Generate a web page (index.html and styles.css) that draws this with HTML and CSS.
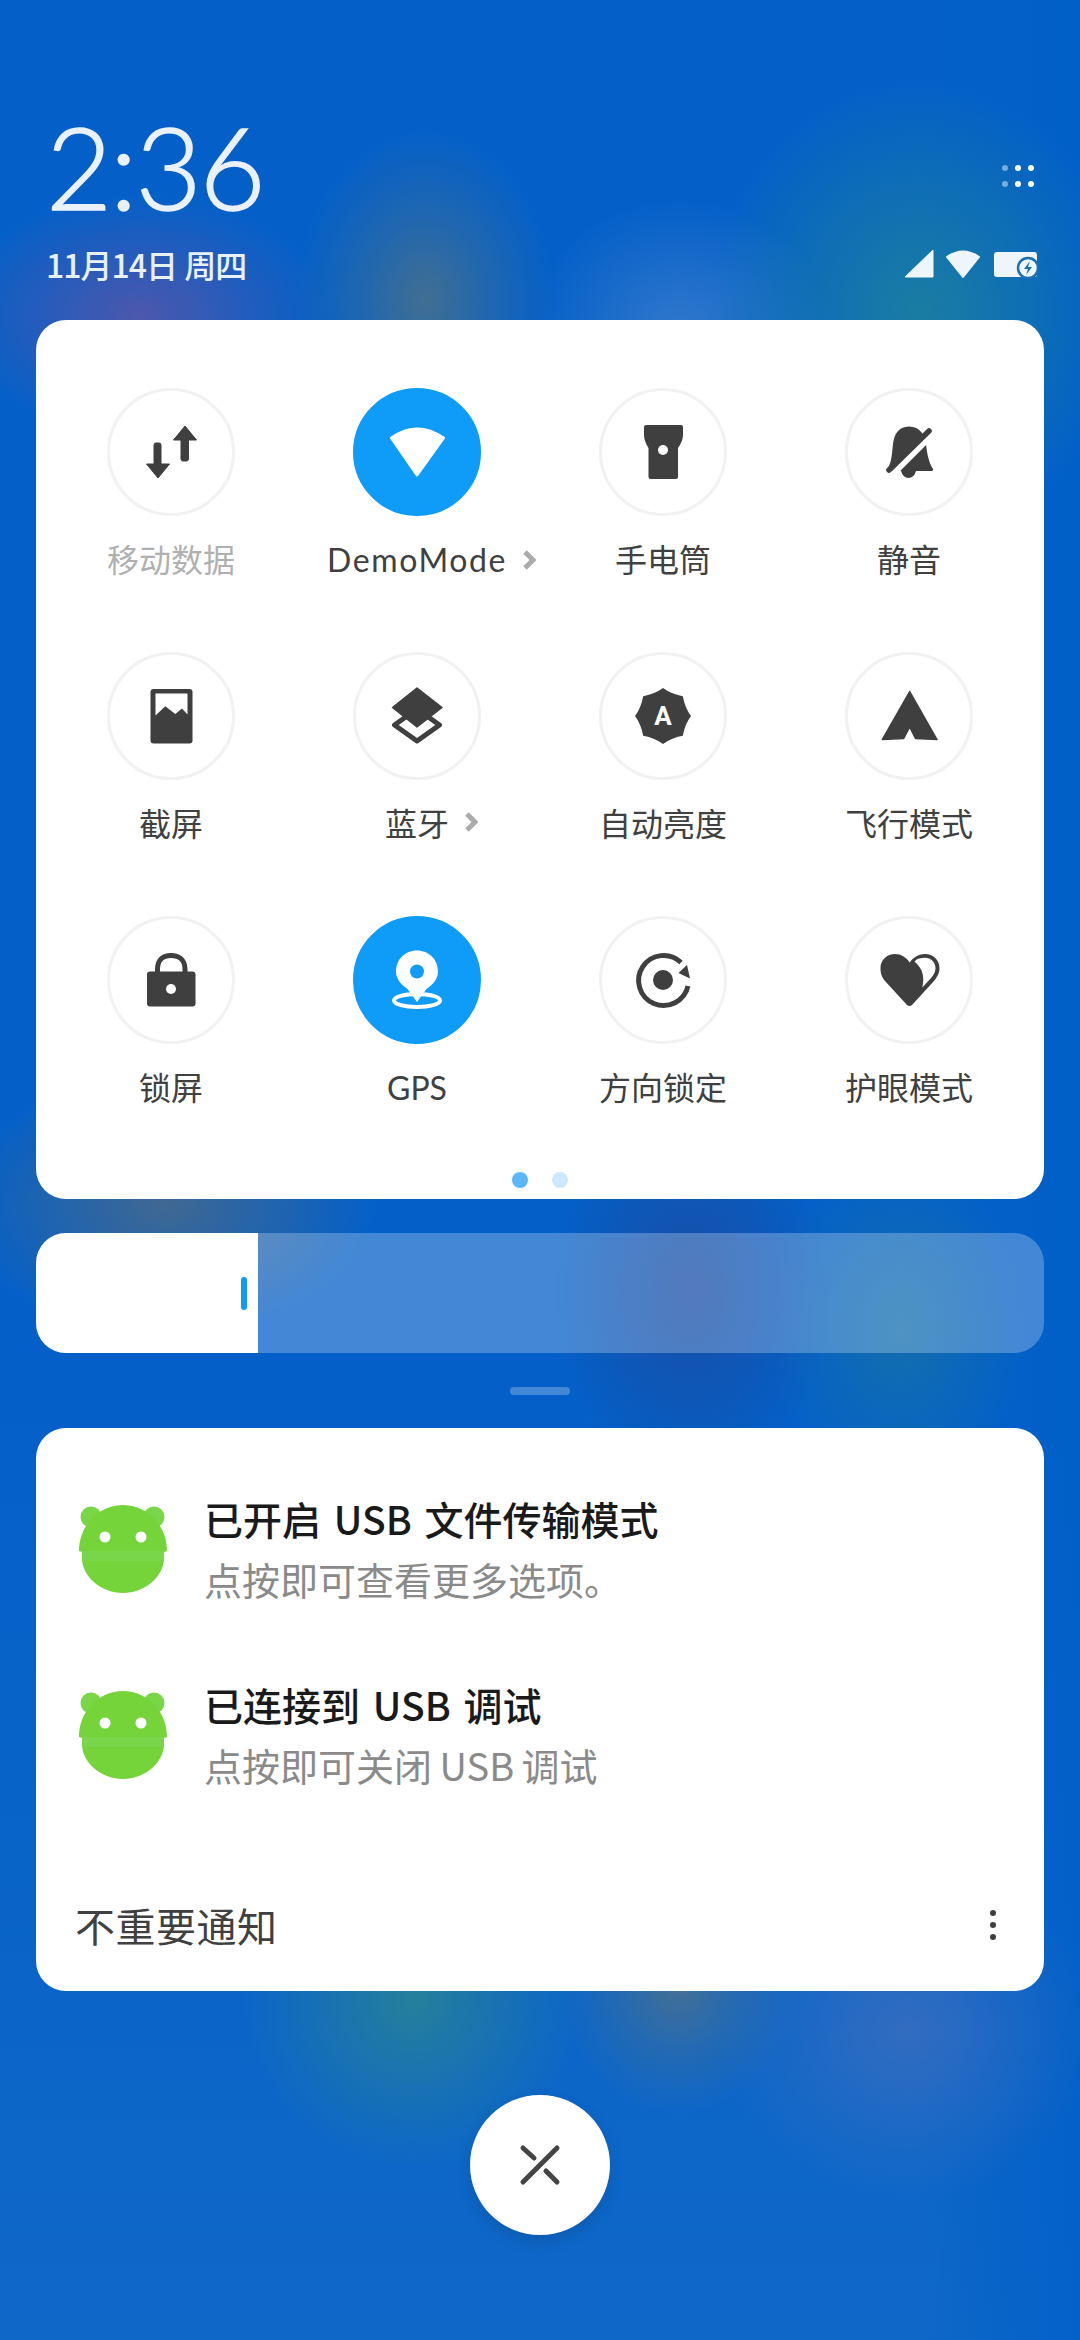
FILE: index.html
```html
<!DOCTYPE html>
<html lang="zh-CN">
<head>
    <meta charset="utf-8">
    <title>Control Center</title>
    <link rel="stylesheet" href="styles.css">
</head>
<body>
    <header class="header">
        <div class="clock-block">
            <div class="clock">2:36</div>
            <div class="date">11月14日 周四</div>
        </div>
        <div class="status-block">
            <svg class="grid-dots" width="40" height="28" viewBox="0 0 40 28">
                <g fill="#fff">
                    <circle cx="7" cy="4" r="3" opacity=".45"/><circle cx="20" cy="4" r="3"/><circle cx="33" cy="4" r="3"/>
                    <circle cx="7" cy="20" r="3" opacity=".45"/><circle cx="20" cy="20" r="3"/><circle cx="33" cy="20" r="3"/>
                </g>
            </svg>
            <svg class="status-icons" width="134" height="30" viewBox="0 0 134 30">
                <path d="M1 28 L29 1 V28 Z" fill="#eef5fb" stroke="#eef5fb" stroke-width="1" stroke-linejoin="round"/>
                <path d="M43 8 Q59 -3 75 8 L59 28 Z" fill="#eef5fb" stroke="#eef5fb" stroke-width="2" stroke-linejoin="round"/>
                <rect x="90" y="3" width="43" height="25" rx="3" fill="#eef5fb"/>
                <circle cx="124" cy="19" r="10" fill="#eef5fb" stroke="#1c6fb0" stroke-width="2.5"/>
                <path d="M126 12 L120 20 H124 L122 26 L128 18 H124 Z" fill="#1c6fb0"/>
            </svg>
        </div>
    </header>

    <section class="panel toggles">
        <div class="toggle-grid">
            <div class="toggle">
                <div class="circle">
                    <svg viewBox="0 0 128 128">
                        <path d="M78 38 L89.5 52 H81.5 V71 Q81.5 73 79.5 73 H76 Q74 73 74 71 V52 H66.5 Z" fill="#3f3f3f" stroke="#3f3f3f" stroke-linejoin="round"/>
                        <path d="M51 90 L39.5 76 H47 V57 Q47 55 49 55 H52 Q54 55 54 57 V76 H62.5 Z" fill="#3f3f3f" stroke="#3f3f3f" stroke-linejoin="round"/>
                    </svg>
                </div>
                <span class="label muted">移动数据</span>
            </div>
            <div class="toggle">
                <div class="circle on">
                    <svg viewBox="0 0 128 128">
                        <path d="M38.5 50 Q64 32 90.5 50 L64 87 Z" fill="#fff" stroke="#fff" stroke-width="3" stroke-linejoin="round"/>
                    </svg>
                </div>
                <span class="label latin demo has-more">DemoMode<svg class="chevron" width="14" height="20" viewBox="0 0 14 20"><path d="M3 2 L11 10 L3 18" fill="none" stroke="#ababab" stroke-width="5"/></svg></span>
            </div>
            <div class="toggle">
                <div class="circle">
                    <svg viewBox="0 0 128 128">
                        <path d="M47 37 H82 Q84 37 84 39 V47 Q84 53 79 60 V89 Q79 91 77 91 H51.5 Q49.5 91 49.5 89 V60 Q45 53 45 47 V39 Q45 37 47 37 Z" fill="#3f3f3f"/>
                        <circle cx="64" cy="62" r="5" fill="#fff"/>
                    </svg>
                </div>
                <span class="label">手电筒</span>
            </div>
            <div class="toggle">
                <div class="circle">
                    <svg viewBox="0 0 128 128">
                        <path d="M64 38.5 C75 38.5 80 47 81 56 C82 66 84 75 88 81 Q88.5 83 86 83 H71 Q69 90 63.5 90 Q58 90 56 83 H44 Q41.5 83 43 80 C47 73 47 64 48 56 C49 47 53 38.5 64 38.5 Z" fill="#3f3f3f"/>
                        <path d="M45 89 L93 41" stroke="#fff" stroke-width="6"/>
                        <path d="M44 82 L84 43" stroke="#3f3f3f" stroke-width="5.5" stroke-linecap="round"/>
                    </svg>
                </div>
                <span class="label">静音</span>
            </div>

            <div class="toggle">
                <div class="circle">
                    <svg viewBox="0 0 128 128">
                        <rect x="43.5" y="37" width="42" height="54.5" rx="3" fill="#3f3f3f"/>
                        <path d="M48.5 63.5 V41.5 H80.5 V62.5 L75 56.5 L68.3 62 L58.3 54.3 Z" fill="#fff"/>
                    </svg>
                </div>
                <span class="label">截屏</span>
            </div>
            <div class="toggle">
                <div class="circle">
                    <svg viewBox="0 0 128 128">
                        <path d="M64 57 L86.5 73 L64 89 L41.5 73 Z" fill="#fff" stroke="#3f3f3f" stroke-width="5" stroke-linejoin="round"/>
                        <path d="M64 36 L89 55.5 L64 75 L39.5 55.5 Z" fill="#3f3f3f" stroke="#3f3f3f" stroke-width="1.5" stroke-linejoin="round"/>
                    </svg>
                </div>
                <span class="label has-more">蓝牙<svg class="chevron" width="14" height="20" viewBox="0 0 14 20"><path d="M3 2 L11 10 L3 18" fill="none" stroke="#ababab" stroke-width="5"/></svg></span>
            </div>
            <div class="toggle">
                <div class="circle">
                    <svg viewBox="0 0 128 128">
                        <path d="M64 36 Q72 42 83.8 44.2 Q86 56 92 64 Q86 72 83.8 83.8 Q72 86 64 92 Q56 86 44.2 83.8 Q42 72 36 64 Q42 56 44.2 44.2 Q56 42 64 36 Z" fill="#3f3f3f"/>
                        <text x="64" y="73" class="badge-letter">A</text>
                    </svg>
                </div>
                <span class="label">自动亮度</span>
            </div>
            <div class="toggle">
                <div class="circle">
                    <svg viewBox="0 0 128 128">
                        <path d="M64.7 39.5 L92 87.5 L70.5 86.5 L64.7 75 L58.7 86.5 L37.3 87.5 Z" fill="#3f3f3f" stroke="#3f3f3f" stroke-width="1.5" stroke-linejoin="round"/>
                    </svg>
                </div>
                <span class="label">飞行模式</span>
            </div>

            <div class="toggle">
                <div class="circle">
                    <svg viewBox="0 0 128 128">
                        <path d="M50.5 57 V53 C50.5 44 56 39.5 64 39.5 C72 39.5 78 44 78 53 V57" fill="none" stroke="#3f3f3f" stroke-width="5"/>
                        <rect x="40" y="55.5" width="48.5" height="35" rx="3" fill="#3f3f3f"/>
                        <circle cx="64" cy="73" r="5" fill="#fff"/>
                    </svg>
                </div>
                <span class="label">锁屏</span>
            </div>
            <div class="toggle">
                <div class="circle on">
                    <svg viewBox="0 0 128 128">
                        <ellipse cx="64" cy="84.5" rx="23" ry="6.5" fill="none" stroke="#fff" stroke-width="4"/>
                        <path d="M64 86 L54.5 73 C47 68 43 62 43 55.5 C43 43.5 52 34.5 64 34.5 C76 34.5 85 43.5 85 55.5 C85 62 81 68 73.5 73 Z" fill="#fff"/>
                        <circle cx="64" cy="55.5" r="7" fill="#0f9bf8"/>
                    </svg>
                </div>
                <span class="label latin">GPS</span>
            </div>
            <div class="toggle">
                <div class="circle">
                    <svg viewBox="0 0 128 128">
                        <path d="M89 70 A25 25 0 1 1 82 46.5" fill="none" stroke="#3f3f3f" stroke-width="5"/>
                        <path d="M88 49 L91 62.5 L79.5 57 Z" fill="#3f3f3f"/>
                        <circle cx="64" cy="64" r="10" fill="#3f3f3f"/>
                    </svg>
                </div>
                <span class="label">方向锁定</span>
            </div>
            <div class="toggle">
                <div class="circle">
                    <svg viewBox="0 0 128 128">
                        <path d="M64.5 90 Q63 90 62 89 L40 65 C36 60 35.5 56 35.5 52 C35.5 44 42 38 50 38 C56 38 61 41 64.7 46.5 C68.5 41 74 38 80 38 C88 38 94.5 44 94.5 52 C94.5 56 93 60 89 65 L67 89 Q66 90 64.5 90 Z" fill="#3f3f3f"/>
                        <path d="M69.5 45.5 C72 42.5 76 41.8 80 41.8 C86 41.8 90.5 46.5 90.5 52 C90.5 55.5 89 58.5 86.5 61.5 L77.3 71.5 C79.5 62 78.5 53 69.5 45.5 Z" fill="#fff"/>
                    </svg>
                </div>
                <span class="label">护眼模式</span>
            </div>
        </div>
        <div class="pager">
            <span class="pager-dot active"></span>
            <span class="pager-dot"></span>
        </div>
    </section>

    <section class="slider">
        <div class="slider-fill"><span class="slider-thumb"></span></div>
    </section>

    <div class="handle"></div>

    <section class="panel notifications">
        <div class="notif">
            <svg class="app-icon" width="88" height="88" viewBox="0 0 88 88">
                <circle cx="12" cy="12" r="10.5" fill="#79d747"/>
                <circle cx="75" cy="12" r="10.5" fill="#79d747"/>
                <path d="M44 0 C68 0 88 20 88 46 L85 47 V53 C85 72 65 88 44 88 C23 88 3 72 3 53 V47 L0 46 C0 20 20 0 44 0 Z" fill="#74d43a"/>
                <rect x="3" y="46" width="82" height="10" fill="#79d64a"/>
                <circle cx="26" cy="32" r="5.5" fill="#fff"/>
                <circle cx="62" cy="32" r="5.5" fill="#fff"/>
            </svg>
            <div class="notif-text">
                <div class="notif-title">已开启 USB 文件传输模式</div>
                <div class="notif-sub">点按即可查看更多选项。</div>
            </div>
        </div>
        <div class="notif">
            <svg class="app-icon" width="88" height="88" viewBox="0 0 88 88">
                <circle cx="12" cy="12" r="10.5" fill="#79d747"/>
                <circle cx="75" cy="12" r="10.5" fill="#79d747"/>
                <path d="M44 0 C68 0 88 20 88 46 L85 47 V53 C85 72 65 88 44 88 C23 88 3 72 3 53 V47 L0 46 C0 20 20 0 44 0 Z" fill="#74d43a"/>
                <rect x="3" y="46" width="82" height="10" fill="#79d64a"/>
                <circle cx="26" cy="32" r="5.5" fill="#fff"/>
                <circle cx="62" cy="32" r="5.5" fill="#fff"/>
            </svg>
            <div class="notif-text">
                <div class="notif-title">已连接到 USB 调试</div>
                <div class="notif-sub">点按即可关闭 USB 调试</div>
            </div>
        </div>
        <div class="notif-footer">
            <span class="footer-text">不重要通知</span>
            <svg width="8" height="32" viewBox="0 0 8 32">
                <g fill="#3f3f3f"><circle cx="4" cy="4" r="3"/><circle cx="4" cy="16" r="3"/><circle cx="4" cy="28" r="3"/></g>
            </svg>
        </div>
    </section>

    <button class="fab">
        <svg width="48" height="48" viewBox="0 0 48 48">
            <g stroke="#444" stroke-width="5" stroke-linecap="round">
                <path d="M7 41 L41 7"/>
                <path d="M7 7 L18 17"/>
                <path d="M30 30 L41 41"/>
            </g>
        </svg>
    </button>
</body>
</html>
```
FILE: styles.css
```css
html, body {
    margin: 0;
    padding: 0;
}

body {
    width: 1080px;
    height: 2340px;
    overflow: hidden;
    font-family: "Noto Sans CJK SC", sans-serif;
    background-color: #0b66c8;
    background-image:
        radial-gradient(ellipse 130px 170px at 425px 300px, rgba(72, 112, 140, 0.9), rgba(72, 112, 140, 0.4) 50%, rgba(72, 112, 140, 0)),
        radial-gradient(ellipse 190px 120px at 140px 315px, rgba(95, 85, 165, 0.8), rgba(95, 85, 165, 0.35) 55%, rgba(95, 85, 165, 0)),
        radial-gradient(ellipse 210px 230px at 920px 310px, rgba(30, 130, 155, 0.85), rgba(30, 130, 155, 0.4) 55%, rgba(30, 130, 155, 0)),
        radial-gradient(ellipse 150px 130px at 680px 330px, rgba(60, 125, 205, 0.8), rgba(60, 125, 205, 0)),
        radial-gradient(ellipse 210px 130px at 165px 1205px, rgba(75, 105, 135, 0.85), rgba(75, 105, 135, 0)),
        radial-gradient(ellipse 140px 200px at 690px 1290px, rgba(30, 72, 155, 0.8), rgba(30, 72, 155, 0)),
        radial-gradient(ellipse 130px 180px at 900px 1330px, rgba(20, 112, 170, 0.9), rgba(20, 112, 170, 0)),
        radial-gradient(ellipse 170px 170px at 413px 2000px, rgba(40, 130, 150, 0.9), rgba(40, 130, 150, 0.4) 55%, rgba(40, 130, 150, 0)),
        radial-gradient(ellipse 120px 130px at 678px 1985px, rgba(72, 112, 145, 0.95), rgba(72, 112, 145, 0.4) 50%, rgba(72, 112, 145, 0)),
        radial-gradient(ellipse 190px 170px at 909px 2030px, rgba(60, 110, 190, 0.8), rgba(60, 110, 190, 0.35) 55%, rgba(60, 110, 190, 0)),
        linear-gradient(to right, rgba(0, 95, 200, 0) 85%, rgba(0, 95, 200, 0.8) 100%),
        linear-gradient(to bottom, #0460c8 0, #0460c8 1400px, #0f68c8 2340px);
}

.header {
    height: 320px;
    box-sizing: border-box;
    padding: 104px 42px 0 46px;
    display: flex;
    justify-content: space-between;
}

.clock {
    font-family: "Lato", sans-serif;
    font-weight: 300;
    font-size: 114px;
    line-height: 124px;
    letter-spacing: -2px;
    -webkit-text-stroke: 1.5px #eaf1fa;
    color: #eaf1fa;
}

.date {
    margin-top: 14px;
    font-size: 32px;
    line-height: 44px;
    font-weight: 500;
    letter-spacing: -1px;
    word-spacing: 1px;
    color: #e8f0f8;
}

.status-block {
    display: flex;
    flex-direction: column;
    align-items: flex-end;
    padding-top: 60px;
}

.grid-dots {
    display: block;
}

.status-icons {
    display: block;
    margin-top: 57px;
}

.panel {
    margin: 0 36px;
    background-color: #fff;
    border-radius: 30px;
}

.toggles {
    box-sizing: border-box;
    height: 879px;
    padding: 68px 12px 14px;
}

.toggle-grid {
    display: grid;
    grid-template-columns: repeat(4, 246px);
    row-gap: 72px;
}

.toggle {
    display: flex;
    flex-direction: column;
    align-items: center;
}

.circle {
    width: 128px;
    height: 128px;
    box-sizing: border-box;
    border: 3px solid #f2f2f2;
    border-radius: 50%;
    background-color: #fff;
}

.circle svg {
    display: block;
    width: 128px;
    height: 128px;
    margin: -3px;
}

.circle.on {
    background-color: #0f9bf8;
    border-color: #0f9bf8;
}

.label {
    margin: 22px 0 2px;
    font-size: 32px;
    line-height: 40px;
    color: #404040;
}

.label.muted {
    color: #b0b0b0;
}

.label.latin {
    margin: 24px 0 0;
    font-family: "Lato", "Noto Sans CJK SC", sans-serif;
}

.label.demo {
    letter-spacing: 1.6px;
}

.has-more {
    position: relative;
}

.chevron {
    position: absolute;
    left: 100%;
    top: 10px;
    margin-left: 15px;
}

.badge-letter {
    font-family: "Roboto", sans-serif;
    font-weight: 700;
    font-size: 26px;
    fill: #fff;
    text-anchor: middle;
}

.pager {
    display: flex;
    justify-content: center;
    gap: 24px;
    margin-top: 64px;
}

.pager-dot {
    width: 16px;
    height: 16px;
    border-radius: 50%;
    background-color: #cde8fb;
}

.pager-dot.active {
    background-color: #5cb6f8;
}

.slider {
    margin: 34px 36px 0;
    height: 120px;
    border-radius: 30px;
    overflow: hidden;
    background-color: rgba(255, 255, 255, 0.25);
}

.slider-fill {
    width: 222px;
    height: 120px;
    background-color: #fff;
    display: flex;
    align-items: center;
    justify-content: flex-end;
    box-sizing: border-box;
    padding-right: 11px;
}

.slider-thumb {
    width: 6px;
    height: 33px;
    border-radius: 3px;
    background-color: #0f9bf8;
}

.handle {
    width: 60px;
    height: 8px;
    margin: 34px auto 0;
    border-radius: 4px;
    background-color: rgba(255, 255, 255, 0.25);
}

.notifications {
    box-sizing: border-box;
    height: 563px;
    margin-top: 33px;
    padding: 65px 37px 0 43px;
}

.notif {
    display: flex;
    align-items: flex-start;
    gap: 37px;
    margin-bottom: 75px;
}

.app-icon {
    margin-top: 12px;
    flex-shrink: 0;
}

.notif-title {
    font-size: 39px;
    line-height: 50px;
    font-weight: 500;
    word-spacing: 4px;
    color: #1a1a1a;
}

.notif-sub {
    margin-top: 11px;
    font-size: 38px;
    line-height: 50px;
    word-spacing: -1px;
    color: #8a8a8a;
}

.notif-footer {
    display: flex;
    justify-content: space-between;
    align-items: center;
    margin-top: 105px;
    margin-left: -4px;
    padding-right: 10px;
    line-height: 60px;
}

.footer-text {
    font-size: 40px;
    letter-spacing: 0.5px;
    color: #404040;
}

.fab {
    display: flex;
    align-items: center;
    justify-content: center;
    width: 140px;
    height: 140px;
    margin: 104px auto 0;
    padding: 0;
    border: none;
    border-radius: 50%;
    background-color: #fff;
    box-shadow: 0 6px 16px rgba(0, 0, 0, 0.12);
}
```
